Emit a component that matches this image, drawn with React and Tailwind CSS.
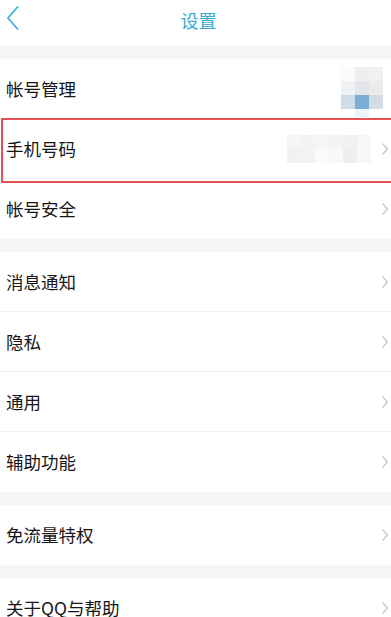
import React from "react";

const font = { fontFamily: '"Noto Sans CJK SC", "Noto Sans", sans-serif' };

function Chevron() {
  return (
    <svg width="8" height="14" viewBox="0 0 8 14" className="shrink-0">
      <path d="M1.5 1.5 L6.5 7 L1.5 12.5" fill="none" stroke="#c7c7cc" strokeWidth="1.3" />
    </svg>
  );
}

function Row({ label, last, right, chevron = true }) {
  return (
    <div className={`h-[60px] flex items-center pl-[6px] pr-[2px] bg-white ${last ? "" : "border-b border-[#f0f0f2]"}`}>
      <span className="flex-1 text-[17.5px] text-[#161616] leading-none">{label}</span>
      {right}
      {chevron && <Chevron />}
    </div>
  );
}

function Gap() {
  return <div className="h-[13px] bg-[#f5f6f8]" />;
}

function MosaicA() {
  const cells = [
    ["#fbfbfb", "#eeeeee", "#f0f0f0"],
    ["#eef2f5", "#e3e5e9", "#ebebeb"],
    ["#cfdcea", "#7aaed6", "#d5dbe3"],
    ["#ffffff", "#eaf4fb", "#ffffff"],
  ];
  return (
    <div className="flex flex-col mt-[8px] mr-[6px]">
      {cells.map((r, i) => (
        <div key={i} className={`flex ${i === 3 ? "h-[8px]" : "h-[14px]"}`}>
          {r.map((c, j) => (
            <div key={j} className="w-[14px] h-full" style={{ background: c }} />
          ))}
        </div>
      ))}
    </div>
  );
}

function MosaicB() {
  const cells = [
    ["#f6f6f6", "#f3f3f3", "#f5f5f5", "#f4f4f4", "#f1f1f1", "#f7f7f7"],
    ["#f1f1f1", "#f3f3f3", "#fafafa", "#f8f8f8", "#eeeeee", "#f8f8f8"],
  ];
  return (
    <div className="flex flex-col mr-[10px]">
      {cells.map((r, i) => (
        <div key={i} className="flex h-[14px]">
          {r.map((c, j) => (
            <div key={j} className="w-[14px] h-full" style={{ background: c }} />
          ))}
        </div>
      ))}
    </div>
  );
}

export default function App() {
  return (
    <div className="w-[391px] h-[617px] overflow-hidden bg-white relative" style={font}>
      <div className="h-[46px] flex items-start pt-[8px] relative bg-white">
        <svg width="14" height="26" viewBox="0 0 14 26" className="absolute left-[6px] top-[5px]">
          <path d="M12 1.5 L2 13 L12 24.5" fill="none" stroke="#3fb3dc" strokeWidth="1.8" />
        </svg>
        <div className="flex-1 text-center text-[18px] leading-[24px] text-[#38a9d2] pl-[6px]">设置</div>
      </div>
      <Gap />
      <Row label="帐号管理" chevron={false} right={<div className="self-start"><MosaicA /></div>} />
      <Row label="手机号码" right={<MosaicB />} />
      <Row label="帐号安全" last />
      <Gap />
      <Row label="消息通知" />
      <Row label="隐私" />
      <Row label="通用" />
      <Row label="辅助功能" last />
      <Gap />
      <Row label="免流量特权" last />
      <Gap />
      <Row label="关于QQ与帮助" last />
      <div className="absolute left-[1px] right-[-3px] top-[118px] h-[65px] border-2 border-[#e45252] pointer-events-none" />
    </div>
  );
}
